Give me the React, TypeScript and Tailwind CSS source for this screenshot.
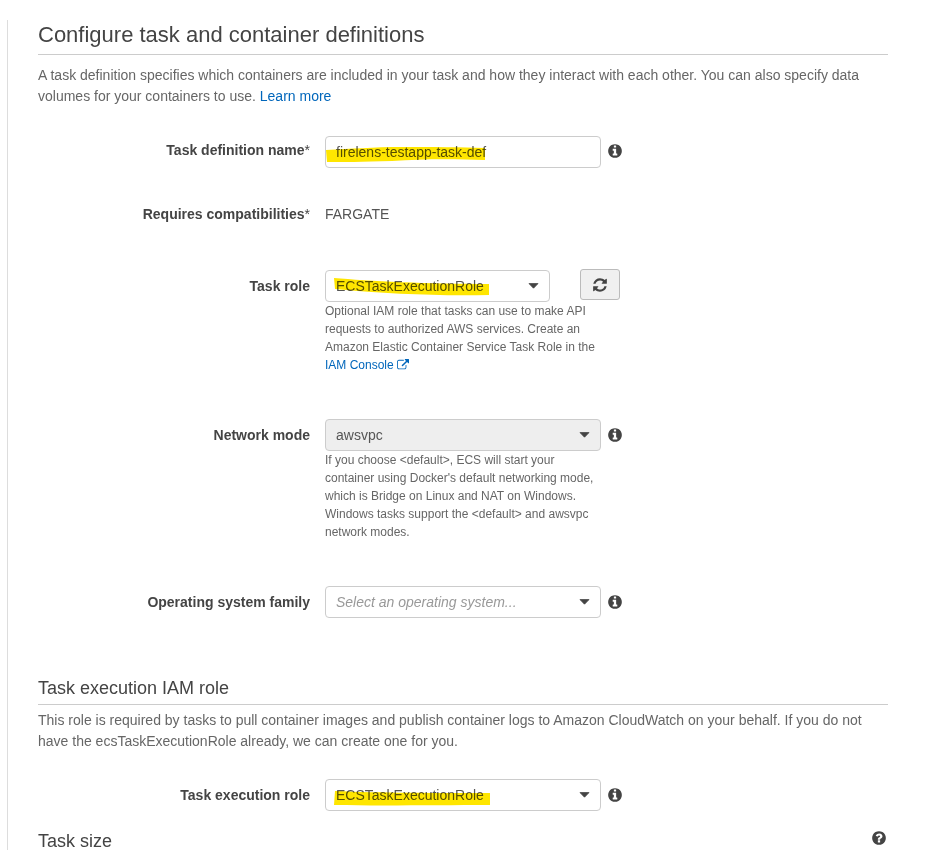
import React from 'react';

// yellow marker strokes drawn over the form values
const Marker = ({ className, d }: { className: string; d: string }) => (
  <svg className={`absolute pointer-events-none mix-blend-multiply ${className}`} viewBox="0 0 170 24">
    <path d={d} fill="#ffe600" />
  </svg>
);

const INFO_PATH =
  'M1152 1376v-160q0-14-9-23t-23-9h-96v-512q0-14-9-23t-23-9h-320q-14 0-23 9t-9 23v160q0 14 9 23t23 9h96v320h-96q-14 0-23 9t-9 23v160q0 14 9 23t23 9h448q14 0 23-9t9-23zm-128-896v-160q0-14-9-23t-23-9h-192q-14 0-23 9t-9 23v160q0 14 9 23t23 9h192q14 0 23-9t9-23zm640 416q0 209-103 385.5t-279.5 279.5-385.5 103-385.5-103-279.5-279.5-103-385.5 103-385.5 279.5-279.5 385.5-103 385.5 103 279.5 279.5 103 385.5z';
const QUESTION_PATH =
  'M1024 1376v-192q0-14-9-23t-23-9h-192q-14 0-23 9t-9 23v192q0 14 9 23t23 9h192q14 0 23-9t9-23zm256-672q0-88-55.5-163t-138.5-116-170-41q-243 0-371 213-15 24 8 42l132 100q7 6 19 6 16 0 25-12 53-68 86-92 34-24 86-24 48 0 85.5 26t37.5 59q0 38-20 61t-68 45q-63 28-115.5 86.5t-52.5 125.5v36q0 14 9 23t23 9h192q14 0 23-9t9-23q0-19 21.5-49.5t54.5-49.5q32-18 49-28.5t46-35 44.5-48 28-60.5 12.5-81zm384 192q0 209-103 385.5t-279.5 279.5-385.5 103-385.5-103-279.5-279.5-103-385.5 103-385.5 279.5-279.5 385.5-103 385.5 103 279.5 279.5 103 385.5z';
const REFRESH_PATH =
  'M1639 1056q0 5-1 7-64 268-268 434.5t-478 166.5q-146 0-282.5-55t-243.5-157l-129 129q-19 19-45 19t-45-19-19-45v-448q0-26 19-45t45-19h448q26 0 45 19t19 45-19 45l-137 137q71 66 161 102t187 36q134 0 250-65t186-179q11-17 53-117 8-23 30-23h192q13 0 22.5 9.5t9.5 22.5zm25-800v448q0 26-19 45t-45 19h-448q-26 0-45-19t-19-45 19-45l138-138q-148-137-349-137-134 0-250 65t-186 179q-11 17-53 117-8 23-30 23h-199q-13 0-22.5-9.5t-9.5-22.5v-7q65-268 270-434.5t480-166.5q146 0 284 55.5t245 156.5l130-129q19-19 45-19t45 19 19 45z';
const EXTERNAL_PATH =
  'M1408 928v320q0 119-84.5 203.5t-203.5 84.5h-832q-119 0-203.5-84.5t-84.5-203.5v-832q0-119 84.5-203.5t203.5-84.5h704q14 0 23 9t9 23v64q0 14-9 23t-23 9h-704q-66 0-113 47t-47 113v832q0 66 47 113t113 47h832q66 0 113-47t47-113v-320q0-14 9-23t23-9h64q14 0 23 9t9 23zm384-864v512q0 26-19 45t-45 19-45-19l-176-176-652 652q-10 10-23 10t-23-10l-114-114q-10-10-10-23t10-23l652-652-176-176q-19-19-19-45t19-45 45-19h512q26 0 45 19t19 45z';

const Glyph = ({ d, className }: { d: string; className: string }) => (
  <svg className={className} viewBox="0 0 1792 1792" fill="currentColor">
    <path d={d} />
  </svg>
);

const Info = ({ className }: { className?: string }) => (
  <Glyph d={INFO_PATH} className={`w-[16px] h-[16px] text-[#444] shrink-0 ${className || ''}`} />
);

const Row = ({ label, star, pad, className, children }: { label: string; star?: string; pad: string; className?: string; children: React.ReactNode }) => (
  <div className={`flex ${className || ''}`}>
    <div className={`w-[272px] shrink-0 text-right text-[14px] leading-[20px] font-bold text-[#444] ${pad}`}>
      {label}
      {star && <span className="font-normal">{star}</span>}
    </div>
    <div className="ml-[15px] min-w-0">{children}</div>
  </div>
);

const Caret = () => (
  <svg className="w-[11px] h-[6px] text-[#444] shrink-0" viewBox="0 0 11 6">
    <path d="M1 0.6 H10 L5.5 5.2 Z" fill="currentColor" stroke="currentColor" strokeWidth="0.8" strokeLinejoin="round" />
  </svg>
);

const SelectBox = ({ value, width, disabled, placeholder }: { value: string; width: string; disabled?: boolean; placeholder?: boolean }) => (
  <div
    className={`${width} h-[32px] flex items-center justify-between pl-[10px] pr-[10px] border border-[#ccc] rounded-[4px] text-[14px] ${
      disabled ? 'bg-[#eee]' : 'bg-white'
    } ${placeholder ? 'italic text-[#999]' : 'text-[#555]'}`}
  >
    <span>{value}</span>
    <Caret />
  </div>
);

const Help = ({ children }: { children: React.ReactNode }) => (
  <div className="w-[276px] text-[12px] leading-[18px] text-[#666]">{children}</div>
);

export default function App() {
  return (
    <div className="relative w-[938px] h-[850px] overflow-hidden bg-white font-['Liberation_Sans',Arial,sans-serif]">
      <div className="ml-[7px] pt-[20px] h-full">
        <div className="border-l border-[#ddd] h-full pl-[30px] pr-[50px]">
          {/* Configure section */}
          <h1 className="pt-[1px] text-[22px] leading-[28px] text-[#444] border-b border-[#ccc] pb-[5px] w-[850px]">
            Configure task and container definitions
          </h1>
          <p className="mt-[10px] text-[14px] leading-[21px] text-[#666] w-[850px]">
            A task definition specifies which containers are included in your task and how they interact with each other. You can also specify data volumes for your containers to use.{' '}
            <a className="text-[#0066bb]">Learn more</a>
          </p>

          <Row label="Task definition name" star="*" pad="pt-[4px]" className="mt-[29px]">
            <div className="flex items-center gap-[6px]">
              <div className="w-[276px] h-[32px] flex items-center pl-[10px] border border-[#ccc] rounded-[4px] text-[14px] text-[#555]">
                firelens-testapp-task-def
              </div>
              <Info className="mt-[-2px]" />
            </div>
          </Row>

          <Row label="Requires compatibilities" star="*" pad="pt-[4px]" className="mt-[32px]">
            <div className="text-[14px] leading-[20px] pt-[4px] text-[#555]">FARGATE</div>
          </Row>

          <Row label="Task role" pad="pt-[6px]" className="mt-[46px]">
            <div className="flex items-start">
              <SelectBox value="ECSTaskExecutionRole" width="w-[225px]" />
              <button className="ml-[30px] mt-[-1px] w-[40px] h-[31px] flex items-center justify-center border border-[#bbb] rounded-[3px] bg-[#f0f0f0]">
                <Glyph d={REFRESH_PATH} className="w-[16px] h-[16px] text-[#444]" />
              </button>
            </div>
            <Help>
              Optional IAM role that tasks can use to make API requests to authorized AWS services. Create an Amazon Elastic Container Service Task Role in the{' '}
              <a className="text-[#0066bb] whitespace-nowrap">
                IAM Console <Glyph d={EXTERNAL_PATH} className="inline w-[12px] h-[12px] mb-[2px]" />
              </a>
            </Help>
          </Row>

          <Row label="Network mode" pad="pt-[6px]" className="mt-[45px]">
            <div className="flex items-center gap-[6px]">
              <SelectBox value="awsvpc" width="w-[276px]" disabled />
              <Info />
            </div>
            <Help>
              If you choose &lt;default&gt;, ECS will start your container using Docker's default networking mode, which is Bridge on Linux and NAT on Windows. Windows tasks support the &lt;default&gt; and awsvpc network modes.
            </Help>
          </Row>

          <Row label="Operating system family" pad="pt-[6px]" className="mt-[45px]">
            <div className="flex items-center gap-[6px]">
              <SelectBox value="Select an operating system..." width="w-[276px]" placeholder />
              <Info />
            </div>
          </Row>

          {/* Task execution IAM role */}
          <h2 className="mt-[58px] text-[18px] leading-[24px] text-[#444] border-b border-[#ccc] pb-[4px] w-[850px]">
            Task execution IAM role
          </h2>
          <p className="mt-[5px] text-[14px] leading-[21px] text-[#666] w-[850px]">
            This role is required by tasks to pull container images and publish container logs to Amazon CloudWatch on your behalf. If you do not have the ecsTaskExecutionRole already, we can create one for you.
          </p>

          <Row label="Task execution role" pad="pt-[6px]" className="mt-[27px]">
            <div className="flex items-center gap-[6px]">
              <SelectBox value="ECSTaskExecutionRole" width="w-[276px]" />
              <Info />
            </div>
          </Row>

          <div className="mt-[18px] flex items-center justify-between w-[850px]">
            <h2 className="text-[18px] leading-[24px] text-[#444]">Task size</h2>
            <Glyph d={QUESTION_PATH} className="w-[16px] h-[16px] text-[#444] mr-[1px] mt-[-6px]" />
          </div>
        </div>
      </div>

      <Marker className="left-[322px] top-[142px] w-[170px] h-[24px]" d="M4 8 C30 7 50 5 80 5 C110 5 140 5 163 6 L163 18 C130 17 100 17 70 19 C40 20 20 20 5 20 Z" />
      <Marker className="left-[328px] top-[275px] w-[170px] h-[24px]" d="M6 3 C40 6 100 9 161 9 L161 20 C110 21 60 19 7 14 Z" />
      <Marker className="left-[330px] top-[785px] w-[170px] h-[24px]" d="M5 6 C50 8 110 8 160 8 L160 20 C110 20 50 21 4 20 Z" />
    </div>
  );
}
